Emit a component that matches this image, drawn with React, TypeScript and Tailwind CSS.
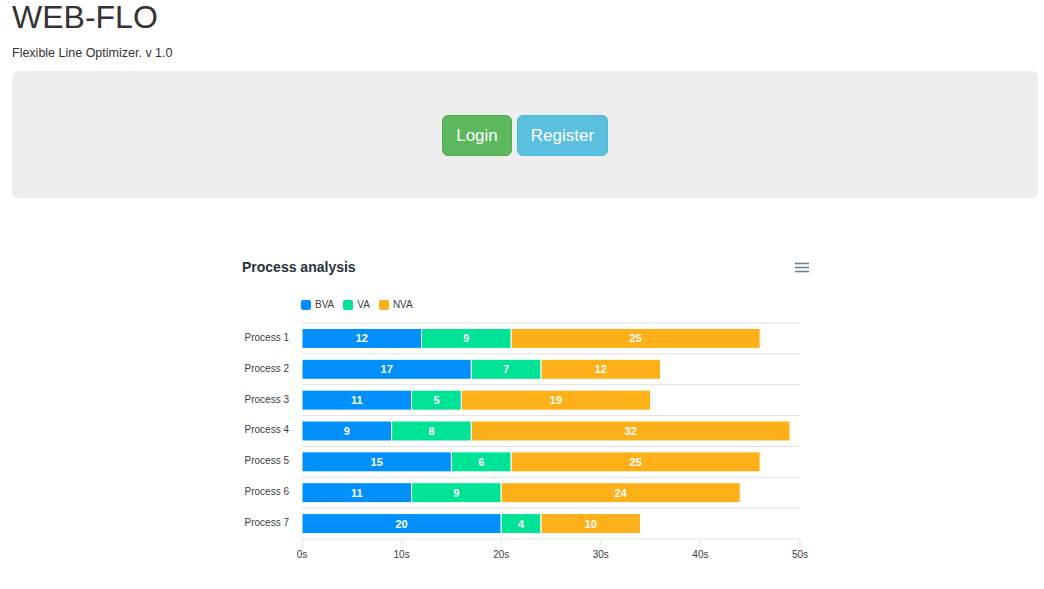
import React from "react";

type Row = { name: string; bva: number; va: number; nva: number };

const rows: Row[] = [
  { name: "Process 1", bva: 12, va: 9, nva: 25 },
  { name: "Process 2", bva: 17, va: 7, nva: 12 },
  { name: "Process 3", bva: 11, va: 5, nva: 19 },
  { name: "Process 4", bva: 9, va: 8, nva: 32 },
  { name: "Process 5", bva: 15, va: 6, nva: 25 },
  { name: "Process 6", bva: 11, va: 9, nva: 24 },
  { name: "Process 7", bva: 20, va: 4, nva: 10 },
];

const colors = { bva: "#008FFB", va: "#00E396", nva: "#FEB019" };

// plot geometry in page coordinates
const X0 = 302;
const X1 = 800;
const Y0 = 323;
const ROW = 30.857;
const BAR = 20;
const PX = (X1 - X0) / 50;

function Legend() {
  const items = [
    { label: "BVA", color: "bg-[#008FFB]" },
    { label: "VA", color: "bg-[#00E396]" },
    { label: "NVA", color: "bg-[#FEB019]" },
  ];
  return (
    <div className="flex items-center gap-[9px] pl-[69px] mt-[24px] h-[12px]">
      {items.map((it) => (
        <div key={it.label} className="flex items-center gap-[4px]">
          <span className={`block w-[10px] h-[10px] rounded-[2px] ${it.color}`} />
          <span className="text-[10px] leading-[12px] text-[#373d3f]">{it.label}</span>
        </div>
      ))}
    </div>
  );
}

function Plot() {
  const ticks = [0, 10, 20, 30, 40, 50];
  return (
    <svg width={586} height={260} className="block" style={{ fontFamily: '"Liberation Sans", Arial, sans-serif' }}>
      <g transform="translate(-232,-311)">
        {Array.from({ length: 8 }).map((_, i) => (
          <line
            key={i}
            x1={X0}
            x2={X1}
            y1={Y0 + i * ROW}
            y2={Y0 + i * ROW}
            stroke="#e0e0e0"
            strokeWidth={1}
          />
        ))}
        {ticks.map((t) => (
          <line
            key={t}
            x1={X0 + t * PX}
            x2={X0 + t * PX}
            y1={Y0 + 7 * ROW}
            y2={Y0 + 7 * ROW + 6}
            stroke="#e0e0e0"
            strokeWidth={1}
          />
        ))}
        {rows.map((r, i) => {
          const cy = Y0 + (i + 0.5) * ROW;
          const top = cy - BAR / 2;
          const segs = [
            { v: r.bva, c: colors.bva, s: 0 },
            { v: r.va, c: colors.va, s: r.bva },
            { v: r.nva, c: colors.nva, s: r.bva + r.va },
          ];
          return (
            <g key={r.name}>
              <text x={289} y={cy + 2.5} textAnchor="end" fontSize={10} fill="#373d3f">
                {r.name}
              </text>
              {segs.map((sg, j) => (
                <g key={j}>
                  <rect
                    x={X0 + sg.s * PX}
                    y={top}
                    width={sg.v * PX}
                    height={BAR}
                    fill={sg.c}
                    stroke="#fff"
                    strokeWidth={1}
                  />
                  <text
                    x={X0 + (sg.s + sg.v / 2) * PX}
                    y={cy + 4}
                    textAnchor="middle"
                    fontSize={11}
                    fontWeight="bold"
                    fill="#fff"
                  >
                    {sg.v}
                  </text>
                </g>
              ))}
            </g>
          );
        })}
        {ticks.map((t) => (
          <text key={t} x={X0 + t * PX} y={558} textAnchor="middle" fontSize={10} fill="#373d3f">
            {t}s
          </text>
        ))}
      </g>
    </svg>
  );
}

export default function App() {
  return (
    <div className="pl-[12px] pr-[6px] text-[#333] font-['Liberation_Sans',Arial,sans-serif] bg-white min-h-[589px]">
      <h1 className="text-[32px] leading-[35px] font-normal m-0">WEB-FLO</h1>
      <p className="text-[12.5px] leading-[17px] mt-[10px] mb-[9px]">Flexible Line Optimizer. v 1.0</p>

      <div className="bg-[#eeeeee] rounded-[6px] pt-[44px] pb-[42px] flex justify-center gap-[5px]">
        <button className="w-[70px] h-[41px] rounded-[6px] bg-[#5cb85c] border border-[#4cae4c] text-white text-[17px] leading-none">
          Login
        </button>
        <button className="w-[91px] h-[41px] rounded-[6px] bg-[#5bc0de] border border-[#46b8da] text-white text-[17px] leading-none">
          Register
        </button>
      </div>

      <div className="w-[586px] mx-auto mt-[52px]">
        <div className="flex justify-between pt-[9px] pl-[10px] pr-[9px]">
          <span className="text-[14px] leading-[16px] font-bold text-[#263238]">Process analysis</span>
          <svg width={14} height={12} className="mt-[3px]">
            <line x1={0} x2={14} y1={1.5} y2={1.5} stroke="#6E8192" strokeWidth={1.6} />
            <line x1={0} x2={14} y1={5.5} y2={5.5} stroke="#6E8192" strokeWidth={1.6} />
            <line x1={0} x2={14} y1={9.5} y2={9.5} stroke="#6E8192" strokeWidth={1.6} />
          </svg>
        </div>
        <Legend />
        <Plot />
      </div>
    </div>
  );
}
